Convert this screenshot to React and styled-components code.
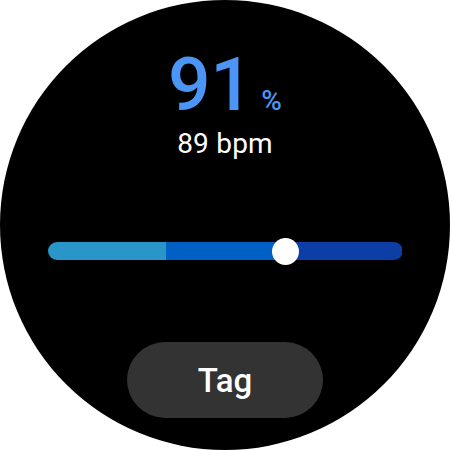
import React from 'react'
import styled, { createGlobalStyle } from 'styled-components'

const GlobalStyle = createGlobalStyle`
  html, body {
    margin: 0;
    padding: 0;
    background: #ffffff;
  }
  body {
    font-family: 'Roboto', 'Liberation Sans', sans-serif;
  }
`

const Watch = styled.div`
  width: 450px;
  height: 450px;
  border-radius: 50%;
  background: #000;
  display: flex;
  flex-direction: column;
  align-items: center;
  padding-top: 47px;
  box-sizing: border-box;
  overflow: hidden;
`

const Readout = styled.div`
  display: flex;
  align-items: baseline;
  color: #4a95f5;
  height: 75px;
`

const Value = styled.span`
  font-size: 75px;
  line-height: 75px;
  font-weight: 500;
  letter-spacing: -0.5px;
`

const Unit = styled.span`
  font-size: 28px;
  line-height: 1;
  font-weight: 500;
  margin-left: 9px;
`

const Pulse = styled.div`
  margin-top: 7px;
  color: #fff;
  font-size: 28px;
  line-height: 30px;
  letter-spacing: 0.2px;
`

const Slider = styled.div`
  position: relative;
  margin-top: 83px;
  width: 355px;
  height: 18px;
`

const Bar = styled.div`
  display: flex;
  height: 100%;
  border-radius: 9px;
  overflow: hidden;
`

const Zone = styled.div`
  flex: 1;
  background: ${p => p.$color};
`

const Thumb = styled.div`
  position: absolute;
  top: 50%;
  width: 27px;
  height: 27px;
  margin-left: -13.5px;
  margin-top: -13px;
  border-radius: 50%;
  background: #fff;
`

const TagButton = styled.button`
  margin-top: 82px;
  width: 196px;
  height: 76px;
  border: none;
  border-radius: 38px;
  background: #333333;
  color: #fff;
  font-family: 'Roboto', 'Liberation Sans', sans-serif;
  font-size: 33px;
  font-weight: 500;
  padding: 0;
`

const zones = ['#2a95c9', '#0060c6', '#0d3ea6']

const App = () => {
  const position = 238 / 355
  return (
    <>
      <GlobalStyle />
      <Watch>
        <Readout>
          <Value>91</Value>
          <Unit>%</Unit>
        </Readout>
        <Pulse>89 bpm</Pulse>
        <Slider>
          <Bar>
            {zones.map(c => (
              <Zone key={c} $color={c} />
            ))}
          </Bar>
          <Thumb style={{ left: `${position * 100}%` }} />
        </Slider>
        <TagButton>Tag</TagButton>
      </Watch>
    </>
  )
}

export default App
